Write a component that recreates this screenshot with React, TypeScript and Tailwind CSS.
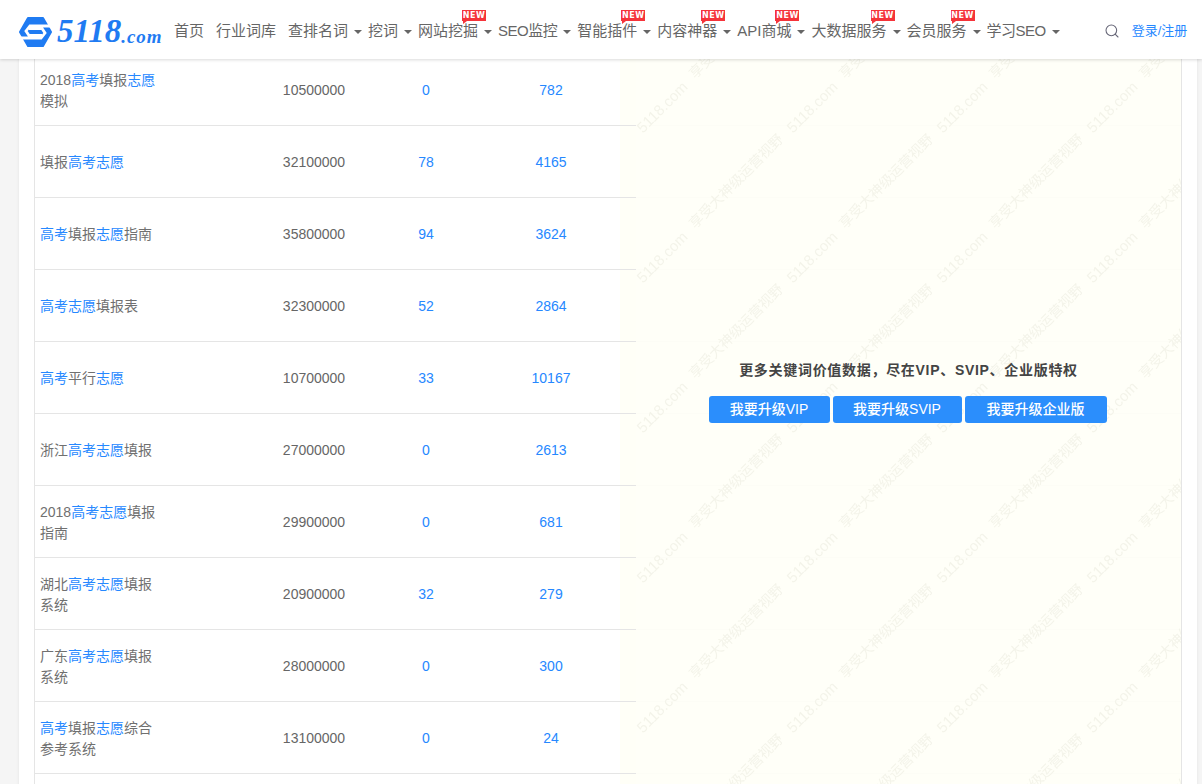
import React from "react";
import { Search } from "lucide-react";

type NavItem = { label: string; caret?: boolean; isNew?: boolean; tight?: boolean };

const navItems: NavItem[] = [
  { label: "首页" },
  { label: "行业词库" },
  { label: "查排名词", caret: true },
  { label: "挖词", caret: true },
  { label: "网站挖掘", caret: true, isNew: true },
  { label: "SEO监控", caret: true, tight: true },
  { label: "智能插件", caret: true, isNew: true },
  { label: "内容神器", caret: true, isNew: true },
  { label: "API商城", caret: true, isNew: true },
  { label: "大数据服务", caret: true, isNew: true },
  { label: "会员服务", caret: true, isNew: true },
  { label: "学习SEO", caret: true, tight: true },
];

// keyword is split on the highlighted words, second line is forced with \n
const rows = [
  { keyword: "2018高考填报志愿\n模拟", index: "10500000", a: "0", b: "782" },
  { keyword: "填报高考志愿", index: "32100000", a: "78", b: "4165" },
  { keyword: "高考填报志愿指南", index: "35800000", a: "94", b: "3624" },
  { keyword: "高考志愿填报表", index: "32300000", a: "52", b: "2864" },
  { keyword: "高考平行志愿", index: "10700000", a: "33", b: "10167" },
  { keyword: "浙江高考志愿填报", index: "27000000", a: "0", b: "2613" },
  { keyword: "2018高考志愿填报\n指南", index: "29900000", a: "0", b: "681" },
  { keyword: "湖北高考志愿填报\n系统", index: "20900000", a: "32", b: "279" },
  { keyword: "广东高考志愿填报\n系统", index: "28000000", a: "0", b: "300" },
  { keyword: "高考填报志愿综合\n参考系统", index: "13100000", a: "0", b: "24" },
  { keyword: "", index: "", a: "", b: "" },
];

const upgrades = [
  { label: "我要升级VIP", width: "w-[121px]" },
  { label: "我要升级SVIP", width: "w-[129px]" },
  { label: "我要升级企业版", width: "w-[142px]" },
];

const Keyword = ({ text }: { text: string }) => (
  <>
    {text.split("\n").map((line, i) => (
      <div key={i}>
        {line.split(/(高考|志愿)/).map((part, j) =>
          part === "高考" || part === "志愿" ? (
            <span key={j} className="text-[#2688ff]">
              {part}
            </span>
          ) : (
            <span key={j}>{part}</span>
          )
        )}
      </div>
    ))}
  </>
);

const Logo = () => (
  <div className="flex items-end w-[146px] h-[32px] mt-[4px] text-[#1f7bf2] italic font-bold leading-none whitespace-nowrap">
    <svg width="33" height="30" viewBox="0 0 33 30" className="mb-[1px] ml-[1px] mr-[5px] shrink-0">
      <polygon
        points="9,1 24,1 32,15 24,29 9,29 1,15"
        fill="#1f7bf2"
        stroke="#1f7bf2"
        strokeWidth="2"
        strokeLinejoin="round"
      />
      <path
        d="M33 9H11L7 14 10 18.5H23M0 21H22L26 16 23 11.5H10"
        fill="none"
        stroke="#fff"
        strokeWidth="2.8"
      />
    </svg>
    <span className="text-[33px] font-['Liberation_Serif',serif]">5118</span>
    <span className="text-[19px] tracking-[1px] mb-[2px] font-['Liberation_Serif',serif]">.com</span>
  </div>
);

const Header = () => (
  <header className="relative z-20 flex items-center h-[59px] pl-[18px] bg-white shadow-[0_1px_3px_rgba(0,0,0,0.15)] text-[15px] text-[#666]">
    <Logo />
    <nav className="flex items-center gap-[6px] ml-[10px] pt-[4px]">
      {navItems.map((item) => (
        <div key={item.label} className={item.caret ? "flex items-center" : "mr-[6px]"}>
          <span className={`relative whitespace-nowrap ${item.tight ? "tracking-[-0.5px]" : ""}`}>
            {item.label}
            {item.isNew && (
              <span className="absolute right-[-8px] top-[-10px] flex items-center justify-center w-[24px] h-[11px] bg-[#f5333a] text-white text-[8px] leading-none font-bold tracking-[0.5px] font-['DejaVu_Sans',sans-serif]">
                NEW
                <span className="absolute left-[1px] top-[11px] border-r-[4px] border-t-[3px] border-r-transparent border-t-[#f5333a]" />
              </span>
            )}
          </span>
          {item.caret && (
            <span className="ml-[6px] border-x-[4px] border-t-[4px] border-x-transparent border-t-[#666]" />
          )}
        </div>
      ))}
    </nav>
    <Search size={16} strokeWidth={1.6} className="ml-[44px] mt-[2px] text-[#667]" />
    <a className="ml-[12px] mt-[2px] text-[13px] text-[#2688ff] whitespace-nowrap">登录/注册</a>
  </header>
);

const Watermark = () => (
  <svg className="absolute inset-0 w-full h-full">
    <defs>
      <pattern id="wm" width="150" height="150" patternUnits="userSpaceOnUse" patternTransform="translate(0 24)">
        <text
          x="27"
          y="30"
          fontSize="15"
          fill="#f4f4ea"
          textAnchor="middle"
          dominantBaseline="middle"
          transform="rotate(-45 27 30)"
        >
          5118.com
        </text>
        <text
          x="101"
          y="104"
          fontSize="14"
          fill="#f4f4ea"
          textAnchor="middle"
          dominantBaseline="middle"
          transform="rotate(-45 101 104)"
        >
          享受大神级运营视野
        </text>
      </pattern>
    </defs>
    <rect width="100%" height="100%" fill="url(#wm)" />
  </svg>
);

const UpgradeOverlay = () => (
  <div className="absolute left-[601px] right-0 top-0 bottom-0 z-10 bg-[#fffff7]/90">
    <Watermark />
    <div className="relative flex flex-col items-center pt-[306px]">
      <p className="text-[14px] leading-[21px] font-bold tracking-[0.7px] text-[#444]">更多关键词价值数据，尽在VIP、SVIP、企业版特权</p>
      <div className="flex gap-[3px] mt-[15px] mr-[2px]">
        {upgrades.map((item) => (
          <button key={item.label} className={`${item.width} h-[27px] rounded-[3px] bg-[#2b8efc] text-[14px] font-medium text-white`}>
            {item.label}
          </button>
        ))}
      </div>
    </div>
  </div>
);

export default function App() {
  return (
    <div className="h-[784px] overflow-hidden bg-[#f5f5f5] font-['Liberation_Sans','Noto_Sans_CJK_SC',sans-serif]">
      <Header />
      <main className="ml-[19px] w-[1178px] h-[740px] mt-[-5px] px-[15px] bg-white shadow-[0_0_3px_rgba(0,0,0,0.08)]">
        <div className="relative h-full border-x border-[#e5e5e5] overflow-hidden">
          {rows.map((row, i) => (
            <div
              key={i}
              className="flex items-stretch h-[72px] pt-[2px] border-b border-[#e5e5e5] text-[14px] text-[#666] bg-[linear-gradient(to_right,transparent_585px,#fffff7_585px)]"
            >
              <div className="flex flex-col justify-center w-[215px] pl-[5px] leading-[21px] text-[#707070]">
                <Keyword text={row.keyword} />
              </div>
              <div className="flex items-center justify-center w-[128px]">{row.index}</div>
              <div className="flex items-center justify-center w-[96px] text-[#2688ff]">{row.a}</div>
              <div className="flex items-center justify-center w-[154px] text-[#2688ff]">{row.b}</div>
            </div>
          ))}
          <UpgradeOverlay />
        </div>
      </main>
    </div>
  );
}
